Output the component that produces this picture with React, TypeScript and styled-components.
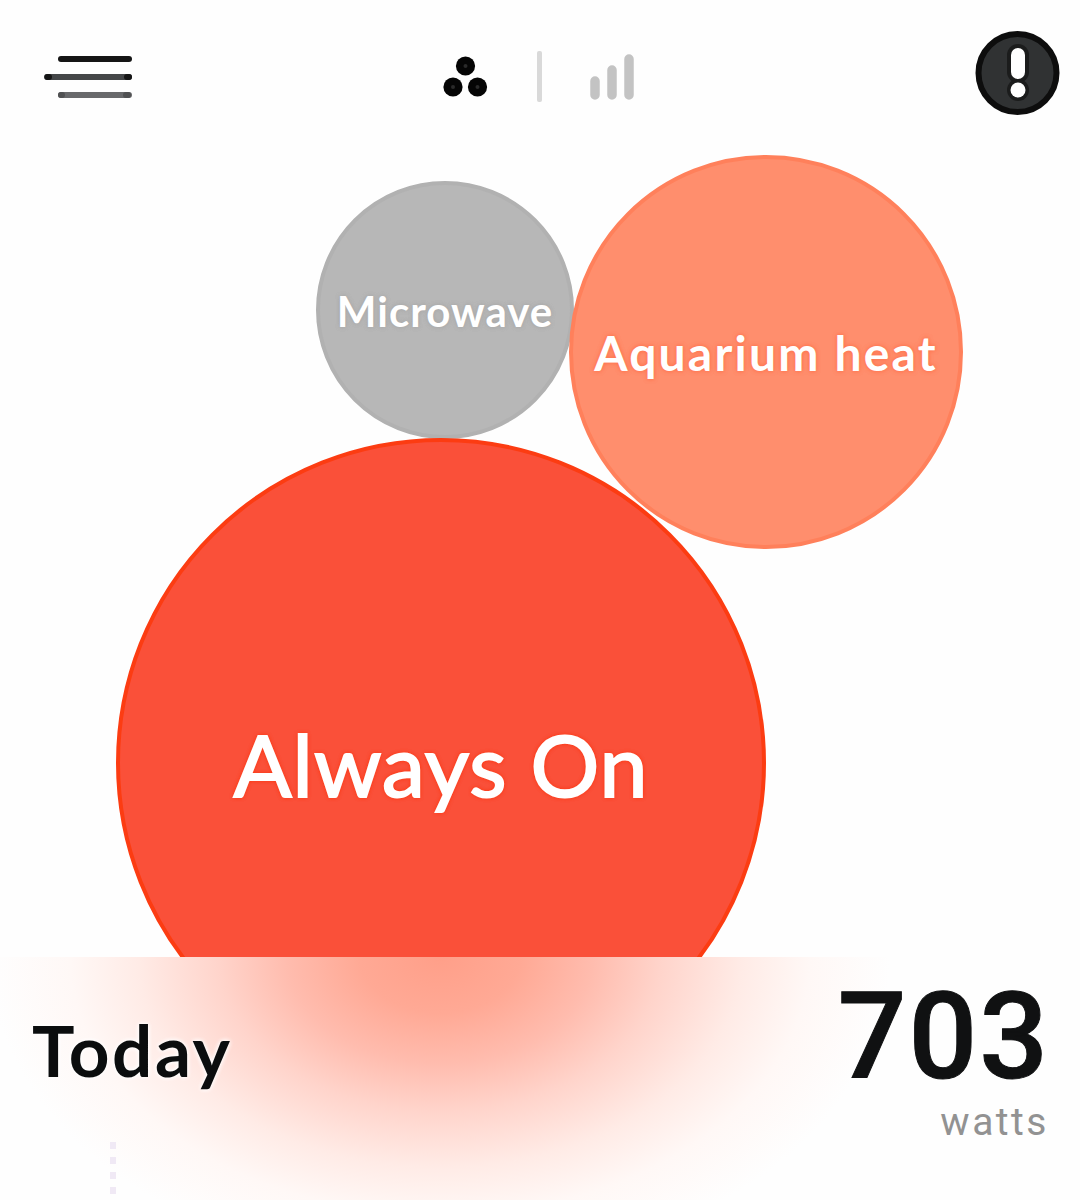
import React from "react";
import styled, { createGlobalStyle } from "styled-components";

const GlobalStyle = createGlobalStyle`
  * { box-sizing: border-box; }
  body { margin: 0; background: #fefefe; }
`;

const Screen = styled.main`
  width: 1080px;
  height: 1200px;
  display: flex;
  flex-direction: column;
  overflow: hidden;
  background: #fefefe;
  font-family: Lato, "Liberation Sans", sans-serif;
`;

const Header = styled.header`
  height: 150px;
  flex: none;
  display: grid;
  grid-template-columns: 1fr auto 1fr;
  align-items: start;
  padding: 29px 19px 0 43px;
`;

const IconButton = styled.button<{ $end?: boolean; $top?: number }>`
  display: block;
  border: 0;
  padding: 0;
  margin-top: ${(p) => p.$top ?? 0}px;
  background: none;
  justify-self: ${(p) => (p.$end ? "end" : "start")};
  svg { display: block; }
`;

const ViewSwitch = styled.nav`
  display: flex;
  align-items: flex-start;
  margin: 22px 26px 0 0;
`;

const Divider = styled.span`
  width: 5px;
  height: 51px;
  margin: 0 48px 0 49px;
  border-radius: 2px;
  background: #d9d9d9;
`;

const Stage = styled.section`
  position: relative;
  height: 807px;
  flex: none;
  overflow: hidden;
`;

const Bubble = styled.div<{ $x: number; $y: number; $r: number; $fill: string; $rim: string }>`
  position: absolute;
  left: ${(p) => p.$x - p.$r}px;
  top: ${(p) => p.$y - p.$r}px;
  width: ${(p) => p.$r * 2}px;
  height: ${(p) => p.$r * 2}px;
  border-radius: 50%;
  border: 4px solid ${(p) => p.$rim};
  background: ${(p) => p.$fill};
  display: flex;
  align-items: center;
  justify-content: center;
`;

const BubbleLabel = styled.span<{ $size: number; $weight: number; $spacing: number; $stroke: number; $halo: string }>`
  color: #fff;
  white-space: nowrap;
  line-height: 1.2;
  font-size: ${(p) => p.$size}px;
  font-weight: ${(p) => p.$weight};
  letter-spacing: ${(p) => p.$spacing}px;
  padding-top: 2px;
  -webkit-text-stroke: ${(p) => p.$stroke}px #fff;
  text-shadow: 0 0 4px ${(p) => p.$halo}, 0 0 4px ${(p) => p.$halo};
`;

const Panel = styled.section`
  flex: 1;
  display: flex;
  justify-content: space-between;
  padding: 0 33px 0 32px;
  background: radial-gradient(
    402px 280px at 440px 0,
    #ff9f89 0%,
    #ffa995 20%,
    #ffbcae 38%,
    #ffd4cb 55%,
    #ffebe6 75%,
    #fff8f6 92%,
    #fefefe 112%
  );
`;

const Period = styled.div`
  display: flex;
  flex-direction: column;
`;

const PeriodName = styled.h1`
  margin: 50px 0 0;
  font-size: 71px;
  line-height: 86px;
  font-weight: 700;
  letter-spacing: 2.6px;
  color: #0b0d0e;
  text-shadow: 0 0 5px #fff, 0 0 5px #fff;
`;

const TimeMark = styled.div`
  width: 6px;
  height: 60px;
  margin: 49px 0 0 78px;
  background: repeating-linear-gradient(#f0e9f5 0 7px, transparent 7px 15px);
`;

const Reading = styled.div`
  display: flex;
  flex-direction: column;
  align-items: flex-end;
  font-family: Roboto, Inter, sans-serif;
`;

const Amount = styled.strong`
  margin: 9px -3px 0 0;
  font-size: 121px;
  line-height: 142px;
  font-weight: 500;
  letter-spacing: 2px;
  color: #101112;
  -webkit-text-stroke: 1px #101112;
`;

const Unit = styled.span`
  margin-top: -9px;
  margin-right: -2px;
  font-size: 39px;
  line-height: 46px;
  letter-spacing: 2.5px;
  color: #929292;
`;

const bubbles = [
  { name: "Microwave", x: 445, y: 160, r: 129, fill: "#b7b7b7", rim: "#b1b1b1", halo: "#aaaaaa", size: 42, weight: 700, spacing: 1, stroke: 0 },
  { name: "Aquarium heat", x: 766, y: 202, r: 197, fill: "#ff8e6d", rim: "#ff805b", halo: "#ff7650", size: 48, weight: 700, spacing: 2.2, stroke: 0 },
  { name: "Always On", x: 441, y: 613, r: 325, fill: "#fa5039", rim: "#fc3c12", halo: "#fc3610", size: 86, weight: 400, spacing: 1, stroke: 2 },
];

const MenuIcon = () => (
  <svg width="90" height="50" viewBox="0 0 90 50" fill="none" strokeWidth="6" strokeLinecap="round">
    <path d="M18 7H86" stroke="#151515" />
    <path d="M4 25H86" stroke="#444648" />
    <path d="M18 43H86" stroke="#68696b" />
    <path d="M4.500 25H6M84 25H86" stroke="#151515" />
    <path d="M18 43H19M83 43H85" stroke="#505152" />
  </svg>
);

const BubblesIcon = () => (
  <svg width="45" height="48" viewBox="0 0 45 48" fill="#050505">
    <circle cx="22.5" cy="15" r="9.6" />
    <circle cx="10" cy="36" r="9.6" />
    <circle cx="34.5" cy="36" r="9.6" />
    <g fill="#2a2a2a">
      <circle cx="22.5" cy="15" r="2" />
      <circle cx="10" cy="36" r="2" />
      <circle cx="34.5" cy="36" r="2" />
    </g>
  </svg>
);

const BarsIcon = () => (
  <svg width="46" height="51" viewBox="0 0 46 51" fill="none" stroke="#c3c3c3" strokeWidth="9.500" strokeLinecap="round">
    <path d="M5 30V44M22 19V44M39 8V44" />
  </svg>
);

const AlertIcon = () => (
  <svg width="86" height="88" viewBox="0 0 86 88">
    <circle cx="42.5" cy="44" r="39" fill="#303233" stroke="#0d0d0d" strokeWidth="6" />
    <path d="M43 26V43" stroke="#1b1c1c" strokeWidth="22" strokeLinecap="round" />
    <circle cx="43" cy="61" r="11" fill="#1b1c1c" />
    <path d="M43 26V43" stroke="#fff" strokeWidth="14" strokeLinecap="round" />
    <circle cx="43" cy="61" r="7.5" fill="#fff" />
  </svg>
);

export default function App() {
  return (
    <Screen>
      <GlobalStyle />
      <Header>
        <IconButton aria-label="Menu" $top={23}><MenuIcon /></IconButton>
        <ViewSwitch>
          <IconButton aria-label="Bubbles"><BubblesIcon /></IconButton>
          <Divider />
          <IconButton aria-label="Bars"><BarsIcon /></IconButton>
        </ViewSwitch>
        <IconButton aria-label="Alerts" $end><AlertIcon /></IconButton>
      </Header>
      <Stage>
        {bubbles.map((b) => (
          <Bubble key={b.name} $x={b.x} $y={b.y} $r={b.r} $fill={b.fill} $rim={b.rim}>
            <BubbleLabel $size={b.size} $weight={b.weight} $spacing={b.spacing} $stroke={b.stroke} $halo={b.halo}>
              {b.name}
            </BubbleLabel>
          </Bubble>
        ))}
      </Stage>
      <Panel>
        <Period>
          <PeriodName>Today</PeriodName>
          <TimeMark />
        </Period>
        <Reading>
          <Amount>703</Amount>
          <Unit>watts</Unit>
        </Reading>
      </Panel>
    </Screen>
  );
}
